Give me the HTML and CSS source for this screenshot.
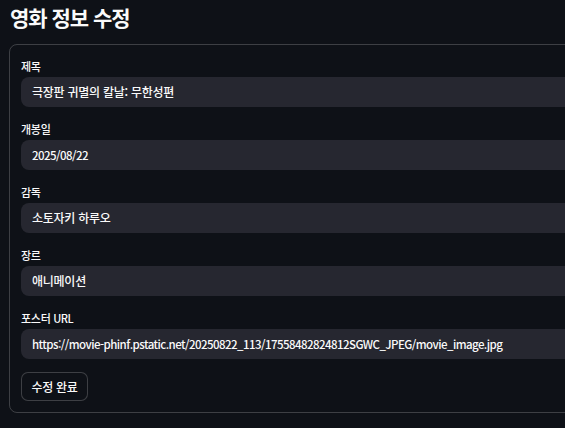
FILE: index.html
```html
<!DOCTYPE html>
<html lang="ko">
<head>
<meta charset="utf-8">
<link rel="stylesheet" href="styles.css">
</head>
<body>
<h1 class="title">영화 정보 수정</h1>
<form class="form-box">
  <div class="field">
    <label class="label">제목</label>
    <div class="input">극장판 귀멸의 칼날: 무한성편</div>
  </div>
  <div class="field">
    <label class="label">개봉일</label>
    <div class="input input-latin">2025/08/22</div>
  </div>
  <div class="field">
    <label class="label">감독</label>
    <div class="input">소토자키 하루오</div>
  </div>
  <div class="field">
    <label class="label">장르</label>
    <div class="input">애니메이션</div>
  </div>
  <div class="field">
    <label class="label">포스터 <span class="latin">URL</span></label>
    <div class="input input-latin">https://movie-phinf.pstatic.net/20250822_113/17558482824812SGWC_JPEG/movie_image.jpg</div>
  </div>
  <div class="actions">
    <button type="button" class="btn">수정 완료</button>
  </div>
</form>
</body>
</html>
```

FILE: styles.css
```css
html, body {
  margin: 0;
  padding: 0;
  background: #0e1117;
  color: #fafafa;
  font-family: "Noto Sans CJK KR", "Noto Sans", sans-serif;
  overflow: hidden;
}
body {
  padding-left: 9px;
  width: 700px;
}
.title {
  margin: 0;
  padding: 2px 0 0 1px;
  height: 44px;
  box-sizing: border-box;
  font-size: 21px;
  line-height: 30px;
  font-weight: 700;
  letter-spacing: -1px;
}
.form-box {
  width: 620px;
  border: 1px solid rgba(250, 250, 250, 0.2);
  border-radius: 8px;
  padding: 13px 11px 11px 11px;
  display: flex;
  flex-direction: column;
  gap: 14px;
}
.field {
  display: flex;
  flex-direction: column;
  gap: 3px;
}
.label {
  font-size: 11px;
  line-height: 16px;
  font-weight: 500;
  letter-spacing: -0.3px;
}
.latin {
  letter-spacing: -0.5px;
}
.input {
  height: 30px;
  background: #262730;
  border-radius: 8px;
  padding: 0 11px;
  font-size: 12px;
  line-height: 30px;
  font-weight: 500;
  letter-spacing: -0.25px;
  white-space: nowrap;
}
.input-latin {
  font-size: 11.5px;
  letter-spacing: -0.55px;
}
.actions {
  margin-top: -1px;
}
.btn {
  height: 29px;
  width: 67px;
  background: #0e1117;
  color: #fafafa;
  border: 1px solid rgba(250, 250, 250, 0.2);
  border-radius: 7px;
  font-family: inherit;
  font-size: 12px;
  font-weight: 500;
  letter-spacing: -0.3px;
  padding: 0;
}
```
